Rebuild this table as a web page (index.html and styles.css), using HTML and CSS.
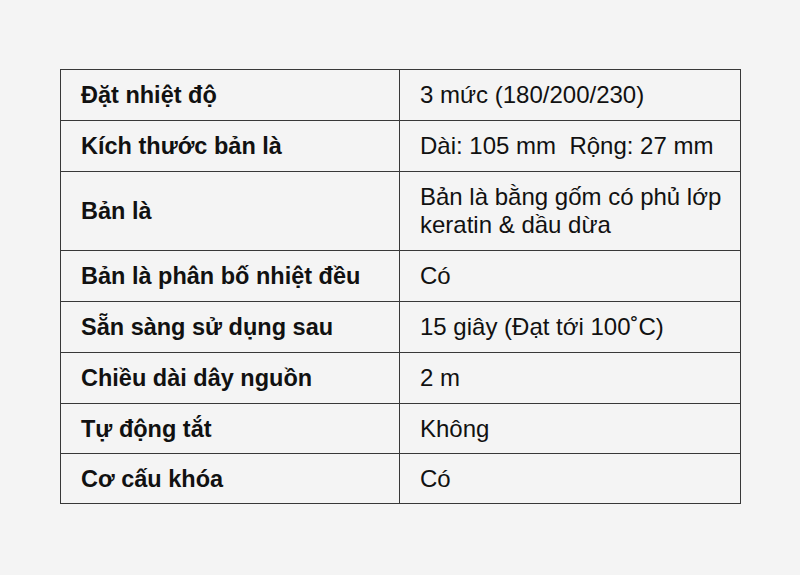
FILE: index.html
```html
<!DOCTYPE html>
<html lang="vi">
<head>
<meta charset="utf-8">
<link rel="stylesheet" href="styles.css">
</head>
<body>
<table class="spec">
  <colgroup><col class="c1"><col class="c2"></colgroup>
  <tr><th>Đặt nhiệt độ</th><td>3 mức (180/200/230)</td></tr>
  <tr><th>Kích thước bản là</th><td>Dài: 105 mm&nbsp; Rộng: 27 mm</td></tr>
  <tr><th>Bản là</th><td>Bản là bằng gốm có phủ lớp keratin &amp; dầu dừa</td></tr>
  <tr><th>Bản là phân bố nhiệt đều</th><td>Có</td></tr>
  <tr><th>Sẵn sàng sử dụng sau</th><td>15 giây (Đạt tới 100˚C)</td></tr>
  <tr><th>Chiều dài dây nguồn</th><td>2 m</td></tr>
  <tr class="short"><th>Tự động tắt</th><td>Không</td></tr>
  <tr class="short"><th>Cơ cấu khóa</th><td>Có</td></tr>
</table>
</body>
</html>
```
FILE: styles.css
```css
html, body {
  margin: 0;
  background: #f4f4f4;
}
body {
  padding: 69px 0 0 60px;
  font-family: "Liberation Sans", Arial, sans-serif;
  color: #111;
}
.spec {
  border-collapse: collapse;
  table-layout: fixed;
  width: 681px;
}
.c1 { width: 339px; }
.spec th, .spec td {
  border: 1px solid #383838;
  padding: 11px 20px;
  line-height: 28px;
  text-align: left;
  vertical-align: middle;
}
.spec th {
  font-weight: bold;
  font-size: 23.5px;
}
.spec td {
  font-size: 24px;
  font-weight: normal;
  padding-right: 6px;
}
.spec tr.short th, .spec tr.short td {
  padding-bottom: 10px;
}
```
